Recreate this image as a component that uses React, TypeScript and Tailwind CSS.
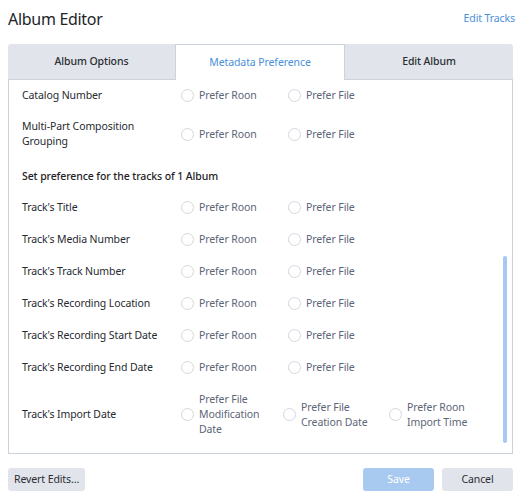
const font = { fontFamily: '"Noto Sans", "Open Sans", sans-serif' };

type Opt = string[];

function Radio({ lines }: { lines: Opt }) {
  return (
    <div className="flex items-center gap-[5px]">
      <span className="w-[13px] h-[13px] shrink-0 rounded-full border border-[#d3d7dd] bg-white" />
      <span className="text-[10.5px] tracking-[-0.1px] leading-[15px] text-[#5c6577]">
        {lines.map((l, i) => (
          <div key={i}>{l}</div>
        ))}
      </span>
    </div>
  );
}

function Row({ label, h = 32, options }: { label: string[]; h?: number; options?: { w: number; lines: Opt }[] }) {
  const opts = options ?? [
    { w: 107, lines: ["Prefer Roon"] },
    { w: 107, lines: ["Prefer File"] },
  ];
  return (
    <div className="flex items-center" style={{ height: h }}>
      <div className="w-[159px] shrink-0 text-[10.5px] tracking-[-0.1px] leading-[15px] text-[#262a30]">
        {label.map((l, i) => (
          <div key={i}>{l}</div>
        ))}
      </div>
      {opts.map((o, i) => (
        <div key={i} className="shrink-0" style={{ width: o.w }}>
          <Radio lines={o.lines} />
        </div>
      ))}
    </div>
  );
}

export default function App() {
  return (
    <div className="w-[525px] h-[500px] bg-white px-[8px] pt-[5px] overflow-hidden" style={font}>
      <div className="flex items-center justify-between pr-[2px] h-[27px]">
        <h1 className="text-[16px] tracking-[-0.3px] text-[#222428]">Album Editor</h1>
        <span className="text-[10.5px] tracking-[-0.1px] text-[#4a90d9]">Edit Tracks</span>
      </div>

      <div className="mt-[12px] w-[505px] rounded-t-[3px] overflow-hidden">
        <div className="flex h-[36px] text-[10.5px] tracking-[-0.1px]">
          <div className="w-[167px] flex items-center justify-center bg-[#e1e4ea] border-b border-[#cbd2dc] font-medium text-[#2a2d33]">
            Album Options
          </div>
          <div className="w-[170px] flex items-center justify-center bg-white border-x border-t border-[#cbd2dc] text-[#4a90d9]">
            Metadata Preference
          </div>
          <div className="flex-1 flex items-center justify-center bg-[#e1e4ea] border-b border-[#cbd2dc] font-medium text-[#2a2d33]">
            Edit Album
          </div>
        </div>

        <div className="flex h-[374px] border-x border-b border-[#cbd2dc]">
          <div className="flex-1 pl-[13px] overflow-hidden">
            <Row label={["Catalog Number"]} h={31} />
            <Row label={["Multi-Part Composition", "Grouping"]} h={46} />
            <div className="mt-[5px] h-[29px] flex items-center text-[10.5px] tracking-[-0.1px] font-medium text-[#1f2226]">
              Set preference for the tracks of 1 Album
            </div>
            <Row label={["Track's Title"]} />
            <Row label={["Track's Media Number"]} />
            <Row label={["Track's Track Number"]} />
            <Row label={["Track's Recording Location"]} />
            <Row label={["Track's Recording Start Date"]} />
            <Row label={["Track's Recording End Date"]} />
            <Row
              label={["Track's Import Date"]}
              h={63}
              options={[
                { w: 102, lines: ["Prefer File", "Modification", "Date"] },
                { w: 106, lines: ["Prefer File", "Creation Date"] },
                { w: 100, lines: ["Prefer Roon", "Import Time"] },
              ]}
            />
          </div>
          <div className="w-[9px] shrink-0 flex flex-col pt-[176px] pb-[10px]">
            <div className="w-[4px] flex-1 rounded-full bg-[#a6c8f2]" />
          </div>
        </div>
      </div>

      <div className="mt-[14px] flex items-center text-[10.5px] tracking-[-0.1px] w-[505px]">
        <button className="h-[23px] px-[6px] rounded-[3px] bg-[#e1e4ea] text-[#2a2d33]">Revert Edits...</button>
        <div className="flex-1" />
        <button className="h-[23px] w-[71px] rounded-[3px] bg-[#a8c9f0] text-white">Save</button>
        <button className="ml-[8px] h-[23px] w-[71px] rounded-[3px] bg-[#e1e4ea] text-[#2a2d33]">Cancel</button>
      </div>
    </div>
  );
}
